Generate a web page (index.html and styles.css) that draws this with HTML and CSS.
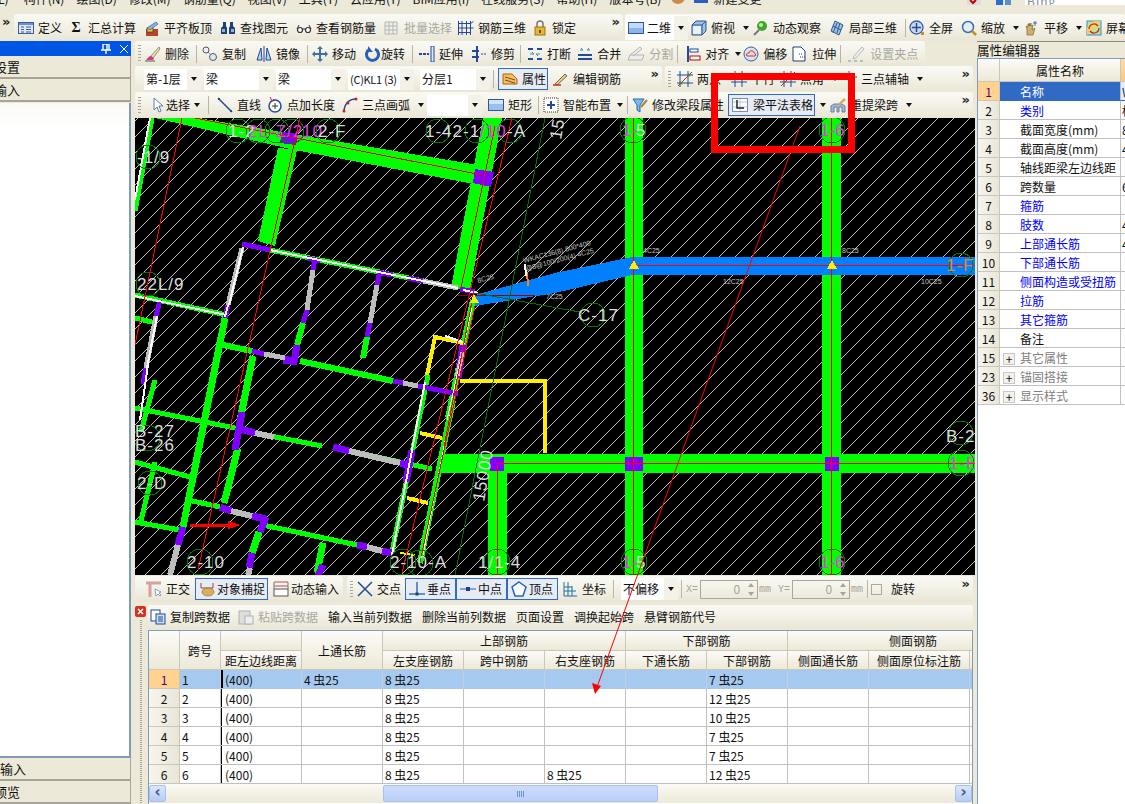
FILE: index.html
```html
<!DOCTYPE html>
<html lang="zh-CN">
<head>
<meta charset="utf-8">
<title>钢筋算量</title>
<link rel="stylesheet" href="styles.css">
</head>
<body>
<div class="app">
  <div class="menu">
    <span class="m m-first">(L)</span><span class="m">构件(N)</span><span class="m">绘图(D)</span><span class="m">修改(M)</span><span class="m">钢筋量(Q)</span><span class="m">视图(V)</span><span class="m">工具(T)</span><span class="m">云应用(Y)</span><span class="m">BIM应用(I)</span><span class="m">在线服务(S)</span><span class="m">帮助(H)</span><span class="m">版本号(B)</span>
    <svg class="ic face" viewBox="0 0 16 16"><circle cx="8" cy="4" r="7" fill="#c98a4a"/><path d="M1 1h14v2H1z" fill="#e8b020"/></svg>
    <svg class="ic ic-new" viewBox="0 0 16 16"><rect x="0" y="-6" width="14" height="16" fill="#2a5fc0"/><rect x="3" y="-3" width="8" height="10" fill="#dfe8fa"/></svg>
    <span class="m m-new">新建变更</span>
    <div class="ext">
      <svg class="ext-ic" viewBox="0 0 16 5"><rect width="14" height="5" fill="#ddd"/><path d="M3 0l3 3 3-3" stroke="#c00" stroke-width="2" fill="none"/></svg>
      <svg class="ext-ic" viewBox="0 0 16 5"><rect width="7" height="5" fill="#2a6fd0"/><rect x="9" width="6" height="5" fill="#5a8fd0"/></svg>
      <span class="bing">Bing</span>
    </div>
  </div>

  <div class="topbar">
    <div class="chev-box"><span class="chev">»</span></div>
    <div class="tb tb-a">
      <div class="it"><svg class="ic" viewBox="0 0 16 16"><rect x=".5" y="2.5" width="15" height="11" fill="#dfe8f5" stroke="#3a5f9a"/><rect x="1" y="3" width="14" height="2" fill="#6f93c8"/><path d="M3 7h3M3 9.500h3M3 12h3M8 7h5M8 9.500h5M8 12h5" stroke="#3a5f9a"/></svg>定义</div>
      <div class="it it-sigma"><span class="sigma">Σ</span>汇总计算</div>
      <div class="it"><svg class="ic" viewBox="0 0 16 16"><rect x="2" y="9" width="12" height="7" fill="#b8442a"/><rect x="3" y="8" width="6" height="4" fill="#f5d020" stroke="#333" stroke-width=".7"/><path d="M3 8l9-6 2 2-8 6z" fill="#8fb0d8" stroke="#3a5f9a" stroke-width=".7"/></svg>平齐板顶</div>
      <div class="it"><svg class="ic" viewBox="0 0 16 16"><path d="M3 2h3v4l1 2v6H1V8l2-2zM10 2h3v4l2 2v6H9V8l1-2z" fill="#1f3f78"/><rect x="2" y="9" width="3" height="3" fill="#8fb0d8"/><rect x="11" y="9" width="3" height="3" fill="#8fb0d8"/></svg>查找图元</div>
      <div class="it"><svg class="ic" viewBox="0 0 16 16"><circle cx="4" cy="10" r="2.500" fill="#fff" stroke="#333" stroke-width="1.200"/><circle cx="12" cy="10" r="2.500" fill="#fff" stroke="#333" stroke-width="1.200"/><path d="M6 9h4M1 9l2-4M15 9l-2-4" stroke="#333"/></svg>查看钢筋量</div>
      <div class="it off"><svg class="ic" viewBox="0 0 16 16"><path d="M1 2h12v12H1zM1 6h12M1 10h12M5 2v12M9 2v12" fill="#eee" stroke="#b5b5b0"/></svg>批量选择</div>
      <div class="it it-m2"><svg class="ic" viewBox="0 0 16 16"><path d="M.5 3.500h12l3-2M.5 8h15M.5 12.500h12M4 1v14M8.500 1v14M12.500 1v14M.5 1v14" fill="none" stroke="#1f4b9a"/></svg>钢筋三维</div>
      <div class="it it-m2"><svg class="ic" viewBox="0 0 16 16"><path d="M5 8V4a3 3 0 0 1 6 0v4" fill="none" stroke="#777" stroke-width="1.500"/><rect x="3" y="7" width="10" height="8" fill="#e8b830" stroke="#9a7510"/><rect x="7" y="10" width="2" height="3" fill="#6a4a00"/></svg>锁定</div>
      <span class="chev chev-end">»</span>
    </div>
    <div class="tb tb-b">
      <div class="white-drop">
        <svg class="ic" viewBox="0 0 16 16"><rect x=".5" y="2.500" width="15" height="11" fill="#8fb4ea" stroke="#2a5a9a"/><rect x="1" y="3" width="14" height="5" fill="#c4d9f6"/></svg><span>二维</span><span class="dd"><i class="ar"></i></span>
      </div>
      <div class="it"><svg class="ic" viewBox="0 0 16 16"><path d="M1 5l4-4h10v10l-4 4H1z" fill="#9cc0e8" stroke="#2d5a8a"/><path d="M1 5h10v10M11 5l4-4" fill="none" stroke="#2d5a8a"/><rect x="2" y="6" width="8" height="8" fill="#e8f0fa"/></svg>俯视<i class="ar ar-m"></i></div>
      <div class="it it-m3"><svg class="ic" viewBox="0 0 16 16"><circle cx="9" cy="6" r="5" fill="#3fa52f"/><circle cx="8" cy="5" r="2" fill="#c8f0a0"/><path d="M1 15l5-5" stroke="#777" stroke-width="2"/></svg>动态观察</div>
      <div class="it"><svg class="ic" viewBox="0 0 16 16"><path d="M6 1l8 4-4 10-8-4z" fill="#9cc0e8" stroke="#2d5a8a"/><path d="M4 6l8 4M8 3l-4 10M11 3l-3 10" stroke="#2d5a8a"/></svg>局部三维</div>
      <i class="sep sep-after5"></i>
      <div class="it"><svg class="ic" viewBox="0 0 16 16"><circle cx="7.500" cy="7.500" r="6.500" fill="#c8d8ee" stroke="#3a5f9a" stroke-width="1.300"/><path d="M7.500 3v9M3 7.500h9" stroke="#1f4b9a" stroke-width="1.500"/><rect x="12" y="12" width="3" height="3" fill="#c89020"/></svg>全屏</div>
      <div class="it"><svg class="ic" viewBox="0 0 16 16"><circle cx="7" cy="7" r="5.500" fill="#e4eefb" stroke="#3a6fb0" stroke-width="1.500"/><path d="M11 11l4 4" stroke="#c89020" stroke-width="2.500"/></svg>缩放<i class="ar ar-m"></i></div>
      <div class="it it-m2"><svg class="ic" viewBox="0 0 16 16"><path d="M3 15V9L2 6l2 1V4l1 2V3l1 3 1-3v3l2-1-1 5 3-2-2 7z" fill="#d0b070" stroke="#7a6530" stroke-width=".7"/><path d="M11 1v5M9 3h4" stroke="#3a6fb0"/></svg>平移<i class="ar ar-m"></i></div>
      <div class="it it-m3"><svg class="ic" viewBox="0 0 16 16"><rect x="1" y="1" width="14" height="14" fill="#bfe0a0" stroke="#3a8fc0"/><path d="M1 8l7-7h7L1 15z" fill="#f5d060"/><path d="M3 9a5 5 0 0 1 9-3M13 8a5 5 0 0 1-9 3" fill="none" stroke="#d02020" stroke-width="1.300"/></svg>屏幕旋转</div>
    </div>
  </div>

  <div class="main">
    <aside class="left">
      <div class="ptitle"><svg class="pin" viewBox="0 0 10 10"><path d="M2 0h6v6H2zM0 6h10M5 6v4M6 0v6" fill="none" stroke="#fff" stroke-width="1.400"/></svg><svg class="pin" viewBox="0 0 10 10"><path d="M1 1l8 8M9 1l-8 8" stroke="#fff"/></svg></div>
      <div class="acc acc-clip">设置</div>
      <div class="acc acc-clip">输入</div>
      <div class="list"></div>
      <div class="acc acc-b1">输入</div>
      <div class="acc acc-clip">预览</div>
    </aside>

    <section class="center">
      <div class="row row-2">
        <div class="tb tb-edit">
          <i class="grip"></i>
          <div class="it it-m3"><svg class="ic" viewBox="0 0 16 16"><path d="M14 1L6 10l2 2 7-9z" fill="#e8e0b0" stroke="#6a6a50" stroke-width=".7"/><path d="M6 10c-2 0-3 2-5 4h7l1-2z" fill="#d04080"/><path d="M0 15h10" stroke="#555"/></svg>删除</div>
          <i class="sep"></i>
          <div class="it it-m2"><svg class="ic" viewBox="0 0 16 16"><circle cx="4" cy="4" r="3" fill="#eef" stroke="#556"/><circle cx="11" cy="11" r="3.500" fill="#dde8f5" stroke="#556"/><path d="M6 6l3 3" stroke="#556" stroke-dasharray="1 1"/></svg>复制</div>
          <div class="it it-g2"><svg class="ic" viewBox="0 0 16 16"><path d="M5 2L1 14h5zM11 2l4 12h-5z" fill="#b8d0ec" stroke="#1f4b9a"/><path d="M8 0v16" stroke="#1f4b9a"/></svg>镜像</div>
          <i class="sep"></i>
          <div class="it it-m3"><svg class="ic" viewBox="0 0 16 16"><path d="M8 0l3 3H9v4h4V5l3 3-3 3V9H9v4h2l-3 3-3-3h2V9H3v2L0 8l3-3v2h4V3H5z" fill="#3a6fa8"/></svg>移动</div>
          <div class="it it-g1 it-t1"><svg class="ic" viewBox="0 0 16 16"><path d="M6 3a6 6 0 1 0 5 0" fill="none" stroke="#2a5fb8" stroke-width="3"/><path d="M4 0v6h5z" fill="#2a5fb8"/></svg>旋转</div>
          <i class="sep"></i>
          <div class="it it-m1"><svg class="ic" viewBox="0 0 16 16"><rect x="12" y="0" width="3" height="16" fill="#dfe8f5" stroke="#1f4b9a"/><path d="M0 8h10" stroke="#1f4b9a" stroke-width="2" stroke-dasharray="3 1"/></svg>延伸</div>
          <div class="it it-g1"><svg class="ic" viewBox="0 0 16 16"><path d="M1 5h7M1 11h7" stroke="#1f4b9a" stroke-width="2"/><path d="M6 0v16" stroke="#1f4b9a" stroke-width="2"/><path d="M10 8h6" stroke="#1f4b9a" stroke-dasharray="2 1"/></svg>修剪</div>
          <i class="sep sep-m2"></i>
          <div class="it it-m1"><svg class="ic" viewBox="0 0 16 16"><path d="M1 13h5M10 13h5M1 3h5M10 3h5" stroke="#1f4b9a" stroke-width="2"/><path d="M3 8h4l-2-2M13 8H9l2 2" fill="none" stroke="#2a8fc0"/></svg>打断</div>
          <div class="it it-m1"><svg class="ic" viewBox="0 0 16 16"><path d="M1 13h14M1 9h14" stroke="#1f4b9a" stroke-width="2"/><path d="M3 4h3l-2-2M13 4h-3l2-2" fill="none" stroke="#2a8fc0"/></svg>合并</div>
          <div class="it off it-m1"><svg class="ic ic-w" viewBox="0 0 18 16"><path d="M1 14h14l2-5H3zM3 9l10-8 2 2-9 7" fill="#eee" stroke="#b5b5b0"/></svg>分割</div>
          <i class="sep sep-m3"></i>
          <div class="it"><svg class="ic" viewBox="0 0 16 16"><path d="M3 0v16" stroke="#1f4b9a" stroke-width="2"/><rect x="5" y="3" width="8" height="3" fill="#fff" stroke="#1f4b9a"/><rect x="5" y="10" width="10" height="4" fill="#fff" stroke="#c00000"/></svg>对齐<i class="ar ar-n"></i></div>
          <div class="it it-m5"><svg class="ic" viewBox="0 0 16 16"><circle cx="8" cy="8" r="7" fill="#d8e4f4" stroke="#3a5f9a"/><path d="M4 10c-2-3 2-3 2-3 0-3 5-3 5 0 2 0 2 3 1 3z" fill="#f5d8d0" stroke="#c03030"/></svg>偏移</div>
          <div class="it it-m2"><svg class="ic" viewBox="0 0 16 16"><path d="M1 1h8l4 4v10H1z" fill="#fff" stroke="#1f3f78"/><path d="M7 8h3M8 11h5" stroke="#1f3f78" stroke-dasharray="1 1"/></svg>拉伸</div>
          <i class="sep sep-m3"></i>
          <div class="it off"><svg class="ic ic-w" viewBox="0 0 18 16"><path d="M6 10l8-9 2 2-8 9-3 1z" fill="#eee" stroke="#bbb"/><path d="M0 15h3M6 15h3M12 15h3" stroke="#bbb" stroke-width="2"/></svg>设置夹点</div>
        </div>
      </div>

      <div class="row row-3">
        <div class="tb tb-combos">
          <div class="cb cb-58"><span>第-1层</span><span class="dd"><i class="ar"></i></span></div>
          <div class="cb cb-69"><span>梁</span><span class="dd"><i class="ar"></i></span></div>
          <div class="cb cb-69"><span>梁</span><span class="dd"><i class="ar"></i></span></div>
          <div class="cb cb-66"><span>(C)KL1 (3)</span><span class="dd"><i class="ar"></i></span></div>
          <div class="cb cb-70"><span>分层1</span><span class="dd"><i class="ar"></i></span></div>
          <i class="sep"></i>
          <div class="it it-on it-attr"><svg class="ic" viewBox="0 0 16 16"><path d="M1 3h9l5 5v5H1z" fill="#f5c060" stroke="#b06010"/><path d="M3 6l10 3M3 9l10 3" stroke="#705010"/></svg>属性</div>
          <div class="it"><svg class="ic" viewBox="0 0 16 16"><path d="M2 13L12 3l2 2-10 9z" fill="#e8d070" stroke="#333" stroke-width=".7"/><path d="M0 14h8" stroke="#c03030" stroke-width="1.500"/></svg>编辑钢筋</div>
          <span class="chev chev-end">»</span>
        </div>
        <div class="tb tb-axis">
          <i class="grip"></i>
          <div class="it"><svg class="ic" viewBox="0 0 16 16"><path d="M3 0v16M11 0v16M0 4h16M0 12h16" stroke="#1f4b9a"/><path d="M1 15L15 1" stroke="#d02020"/><circle cx="4" cy="12" r="1.500" fill="#3a8f30"/><circle cx="12" cy="4" r="1.500" fill="#3a8f30"/></svg>两点</div>
          <div class="it it-par"><svg class="ic" viewBox="0 0 16 16"><path d="M4 0v16M11 0v16M0 5h16M0 11h16" stroke="#1f4b9a"/></svg>平行</div>
          <div class="it it-m1"><svg class="ic" viewBox="0 0 16 16"><path d="M4 0v16M11 0v16M0 5h16M0 11h16" stroke="#1f4b9a"/><path d="M1 15L15 1" stroke="#d02020"/></svg>点角<i class="ar ar-m"></i></div>
          <div class="it it-m5"><svg class="ic" viewBox="0 0 16 16"><path d="M8 0v16M0 6h16" stroke="#1f4b9a"/><circle cx="12" cy="12" r="2" fill="#d02020"/></svg>三点辅轴<i class="ar ar-m"></i></div>
          <span class="chev chev-end">»</span>
        </div>
      </div>

      <div class="row row-4">
        <div class="tb tb-draw">
          <i class="grip"></i>
          <div class="it it-t0"><svg class="ic" viewBox="0 0 16 16"><path d="M4 1v12l3-3 2 5 2-1-2-5h4z" fill="#fff" stroke="#5a7fb0"/></svg>选择<i class="ar ar-m"></i></div>
          <i class="sep sep-r2"></i>
          <div class="it"><svg class="ic" viewBox="0 0 16 16"><path d="M1 1l14 14" stroke="#1f4b9a" stroke-width="1.500"/><path d="M1 1h2v2H1zM13 13h2v2h-2z" fill="#1f4b9a"/></svg>直线</div>
          <div class="it"><svg class="ic" viewBox="0 0 16 16"><circle cx="8" cy="9" r="6" fill="#fff" stroke="#1f4b9a" stroke-width="1.500"/><path d="M8 6v6M5 9h6" stroke="#333"/><path d="M3 0l2 4 2-2" fill="none" stroke="#c03030"/></svg>点加长度</div>
          <div class="it it-g1"><svg class="ic" viewBox="0 0 16 16"><path d="M2 15C2 7 7 2 14 2" fill="none" stroke="#1f4b9a" stroke-width="1.500"/><circle cx="2" cy="14" r="1.500" fill="#d02020"/><circle cx="14" cy="2" r="1.500" fill="#d02020"/><circle cx="6" cy="6" r="1.500" fill="#d02020"/></svg>三点画弧<i class="ar ar-m"></i></div>
          <div class="cb cb-55 cb-tight"><span></span><span class="dd"><i class="ar"></i></span></div>
          <div class="it"><svg class="ic" viewBox="0 0 16 16"><rect x=".5" y="2.500" width="15" height="11" fill="#9cc0ee" stroke="#2a5a9a"/><rect x="1" y="3" width="14" height="4" fill="#d4e3f8"/></svg>矩形</div>
          <i class="sep"></i>
          <div class="it it-m2"><svg class="ic" viewBox="0 0 16 16"><rect x="1" y="1" width="14" height="14" fill="#fff" stroke="#333" stroke-dasharray="1 1"/><path d="M8 4v8M4 8h8" stroke="#1f4b9a" stroke-width="2"/></svg>智能布置<i class="ar ar-n"></i></div>
          <i class="sep sep-m2"></i>
          <div class="it it-m2"><svg class="ic" viewBox="0 0 16 16"><path d="M1 2h11L8 8v7L5 13V8z" fill="#7fb8e8" stroke="#1f6fa8"/><path d="M9 10l6-7" stroke="#b08030" stroke-width="2"/></svg>修改梁段属性</div>
          <div class="it it-on it-table it-m2"><svg class="ic" viewBox="0 0 16 16"><rect x=".5" y="1.500" width="15" height="13" fill="#fff" stroke="#7a8fae"/><path d="M1 5h14M1 10h14M8 2v12" stroke="#b9c6da"/><path d="M5 3v8h7" fill="none" stroke="#222" stroke-width="1.500"/></svg>梁平法表格</div>
          <i class="ar ar-after"></i>
          <div class="it"><svg class="ic" viewBox="0 0 16 16"><path d="M1 15V9l3-2h8l3 2v6h-3v-5H9v5H7v-5H4v5z" fill="#a0b8d8" stroke="#6a7f9a"/><path d="M8 7l6-6 2 2-6 5z" fill="#d8a860"/></svg>重提梁跨<i class="ar ar-m"></i></div>
          <span class="chev chev-end">»</span>
        </div>
      </div>

      <svg class="cad" viewBox="135 118 840 457" shape-rendering="crispEdges" aria-label="CAD 图">
        <defs>
          <pattern id="hatch" width="16" height="16" patternUnits="userSpaceOnUse"><path d="M0 16L16 0" stroke="#bdbdbd" stroke-width="1"/></pattern>
        </defs>
        <rect x="135" y="118" width="840" height="457" fill="#000"/>
        <rect x="135" y="118" width="840" height="457" fill="url(#hatch)"/>

        <!-- thick members -->
        <g fill="#00ff00">
          <polygon points="155,118 198,118 478,165 474,184 295,150"/>
          <polygon points="278,148 297,150 275,246 258,241"/>
          <polygon points="483,118 502,118 470,290 451,288"/>
          <rect x="441" y="454" width="534" height="19"/>
          <rect x="625" y="118" width="18" height="457"/>
          <rect x="822" y="118" width="19" height="457"/>
          <rect x="488" y="463" width="19" height="112"/>
        </g>
        <g fill="#8000ff">
          <polygon points="282,132 298,134 296,145 280,143"/>
          <polygon points="475,169 494,172 491,187 473,183"/>
          <rect x="490" y="457" width="14" height="14"/>
          <rect x="625" y="457" width="18" height="14"/>
          <rect x="825" y="457" width="14" height="14"/>
        </g>
        <polygon points="475,295 555,273 632,257 975,257 975,275 632,275 555,293 475,306" fill="#0080ff"/>

        <!-- thin beams -->
        <g fill="none" stroke-width="6">
          <path class="g" stroke-width="5" d="M152 118L135 211"/>
          <path class="g" stroke-width="5" d="M270 250L424 281M135 295L226 315M135 318L156 323M135 408L240 429M255 433L322 446M350 451L432 469M188 500L220 507M263 525L357 545M135 522L180 530M135 462L190 477M155 462L140 525"/>
          <path class="g" stroke-width="7" d="M225 318L183 527M253 356L240 420M238 448L224 503M323 543L317 573M259 532L252 553"/>
          <path class="g" stroke-width="6" d="M223 345L252 351M300 361L393 381M303 323L297 345M367 337L363 358M473 300L448 418M453 400L420 563"/>
          <path class="g" stroke-width="5" d="M428 375L392 552M155 380L141 432"/>
          <path class="p" stroke-width="5" d="M242 244L270 250M307 258L320 261M377 272L393 275M407 278L423 281M460 289L475 292M252 351L264 354M285 358L297 361M393 381L403 383M418 386L458 394M315 258L313 270M380 271L377 285M228 305L225 318M160 300L156 316M146 368L143 384M307 310L303 323M370 323L367 337"/>
          <path class="p" stroke-width="7" d="M297 345L294 362M283 360L297 362M242 412L235 450M240 429L255 433M333 447L349 451M400 463L410 466M412 450L406 482M183 527L178 545M220 507L231 511M252 516L266 519M266 517L260 532M252 553L249 568M357 545L367 547M382 551L392 553M323 565L317 578M463 345L458 378"/>
          <path class="s" stroke-width="5" d="M423 281L458 288M242 248L228 305M313 270L307 310M377 285L370 323M156 316L146 368M264 354L285 358M403 383L418 386M463 352L457 376"/>
          <path class="s" stroke-width="6" d="M255 433L274 437M349 451L400 463M231 511L252 516M367 547L382 551M178 545L170 575M250 568L248 575"/>
          <path class="y" stroke-width="4" d="M427 375L435 337L463 343M460 381H545V453M420 433L442 438M407 498L428 503"/>
          <path class="w" stroke-width="2" d="M150 118L135 200M270 250L458 288M243 247L229 305M228 305L225 317M135 296L226 315M157 316L147 368M148 365L140 420M425 382L392 555M445 336L463 342M463 290L478 293"/>
          <path class="wl" stroke-width="2" d="M472 308L447 420M453 400L423 555"/>
          <path class="y" stroke-width="2" d="M415 555L400 553"/>
        </g>

        <!-- axis circles -->
        <g fill="none" stroke="#007a00" stroke-width="1">
          <circle cx="238" cy="131" r="12"/><circle cx="258" cy="131" r="12"/><circle cx="277" cy="131" r="12"/><circle cx="292" cy="131" r="12"/><circle cx="328" cy="131" r="12"/>
          <circle cx="438" cy="131" r="12"/><circle cx="477" cy="131" r="12"/><circle cx="510" cy="131" r="12"/>
          <circle cx="148" cy="157" r="12"/><circle cx="148" cy="284" r="12"/>
          <circle cx="633" cy="130" r="13"/><circle cx="832" cy="130" r="13"/>
          <circle cx="593" cy="315" r="12"/><circle cx="961" cy="265" r="12"/><circle cx="961" cy="433" r="12"/><circle cx="961" cy="463" r="13"/>
          <circle cx="147" cy="438" r="13"/><circle cx="150" cy="483" r="12"/><circle cx="200" cy="562" r="13"/><circle cx="403" cy="562" r="13"/><circle cx="420" cy="563" r="13"/><circle cx="497" cy="562" r="13"/>
          <circle cx="634" cy="562" r="13"/><circle cx="832" cy="562" r="13"/>
        </g>

        <!-- centre and reference lines -->
        <g fill="none">
          <path class="r" d="M182 118L135 345M300 118L198 570M512 118L402 573M195 118L482 175M495 126L461 288M633 118V575M831 118V575M497 465V575M497 463H975M475 306L420 562M630 265H975M474 291L444 447"/>
          <path class="dr" d="M458 295H535"/>
          <path class="dg" d="M545 118L455 575M475 293L580 312"/>
          <path class="or" stroke-width="2" d="M527 272L528 286"/>
          <path class="w" stroke-width="2" d="M525 264L526 276"/>
          <path class="r" stroke-width="3" d="M190 525H228"/>
        </g>
        <polygon points="228,521 240,525 228,529" fill="#f00"/>
        <g fill="#ffee00">
          <polygon points="634,260 639,269 629,269"/>
          <polygon points="832,260 837,269 827,269"/>
          <polygon points="474,294 479,303 470,303"/>
        </g>

        <!-- labels -->
        <g class="lbl">
          <text x="228" y="137">1-2</text><text class="pk" x="248" y="137">2L-Z/2</text><text class="pk" x="302" y="137">10</text><text x="318" y="137">2-F</text>
          <text x="425" y="137">1-42-1</text><text class="pk" x="480" y="137">/10</text><text x="507" y="137">-A</text>
          <text x="137" y="163">-1/9</text>
          <text x="137" y="290">22L/9</text>
          <text x="622" y="136" class="pk">1-</text><text x="636" y="136">5</text>
          <text x="820" y="136" class="pk">1-</text><text x="835" y="136" class="pk">6</text>
          <text x="578" y="321">C-17</text>
          <text x="946" y="271" class="or-t">1-F</text>
          <text x="946" y="442">B-2</text>
          <text x="949" y="469" class="pk">1-E</text>
          <text x="135" y="437">B-27</text><text x="135" y="451">B-26</text>
          <text x="137" y="489">2-D</text>
          <text x="187" y="568">2-10</text>
          <text x="390" y="568">2-10-A</text>
          <text x="478" y="568">1/1</text><text x="504" y="568">-4</text>
          <text x="622" y="568" class="pk">1-</text><text x="636" y="568">5</text>
          <text x="820" y="568" class="pk">1-</text><text x="835" y="568" class="pk">6</text>
          <text transform="translate(484,502) rotate(-80)">15000</text>
          <text transform="translate(561,140) rotate(-80)">15</text>
        </g>
        <g class="tiny">
          <text transform="translate(524,263) rotate(-15)">WKAC136(8) 800*400</text>
          <text transform="translate(526,271) rotate(-15)">@8@100/200(4) 4C25</text>
          <text transform="translate(478,283) rotate(-15)">8C25</text>
          <text x="643" y="253">4C25</text><text x="842" y="253">8C25</text>
          <text x="723" y="284">12C25</text><text x="921" y="284">10C25</text>
          <text x="546" y="299">7C25</text>
        </g>
      </svg>

      <div class="row row-snap">
        <div class="tb tb-snap1">
          <div class="it"><svg class="ic" viewBox="0 0 16 16"><path d="M0 2h15M4 2v14" stroke="#d8a0a0" stroke-width="3"/><path d="M9 8l1 7 2-2 2 2 1-1-2-2 2-1z" fill="#fff" stroke="#5a7fb0" stroke-width=".7"/></svg>正交</div>
          <div class="it it-on it-snapb"><svg class="ic" viewBox="0 0 16 16"><path d="M2 2v5h12V2" fill="none" stroke="#a04040"/><ellipse cx="9" cy="11" rx="6" ry="4" fill="#d8b060" stroke="#806020" stroke-width=".6"/></svg>对象捕捉</div>
          <div class="it it-t2"><svg class="ic" viewBox="0 0 16 16"><path d="M1 1h14M1 5h14" stroke="#c05050"/><rect x="1" y="8" width="14" height="7" fill="#fff" stroke="#555"/><path d="M1 8V1M15 8V1" stroke="#777"/></svg>动态输入</div>
        </div>
        <div class="tb tb-snap2">
          <i class="grip"></i>
          <div class="it"><svg class="ic" viewBox="0 0 16 16"><path d="M1 1l14 14M15 1L1 15" stroke="#1f4b9a" stroke-width="1.500"/></svg>交点</div>
          <div class="it it-on it-pt"><svg class="ic" viewBox="0 0 16 16"><path d="M0 13h16" stroke="#3a6fb0" stroke-width="1.500"/><path d="M8 1v12" stroke="#3a6fb0" stroke-width="1.500"/><rect x="6.500" y="11.500" width="3" height="3" fill="#1f3f78"/></svg>垂点</div>
          <div class="it it-on it-pt"><svg class="ic" viewBox="0 0 16 16"><path d="M0 8h16" stroke="#7fa8d8" stroke-width="2"/><rect x="6" y="6" width="4" height="4" fill="#1f3f78"/></svg>中点</div>
          <div class="it it-on it-pt"><svg class="ic" viewBox="0 0 16 16"><path d="M8 1l7 5-3 9H4L1 6z" fill="#fff" stroke="#2a5fb8" stroke-width="1.500"/></svg>顶点</div>
          <div class="it it-co"><svg class="ic" viewBox="0 0 16 16"><path d="M2 1v14h13M6 1v14M10 5v10M2 6h8M2 10h12" stroke="#1f6fa8" fill="none"/></svg>坐标</div>
          <i class="sep sep-sp"></i>
          <div class="cb cb-58 cb-off"><span>不偏移</span><span class="dd"><i class="ar"></i></span></div>
          <i class="sep"></i>
          <span class="xy">X=</span>
          <div class="num"><span>0</span><span class="spin"><i class="ar ar-u"></i><i class="ar ar-g"></i></span></div>
          <span class="xy">mm</span>
          <span class="xy xy-y">Y=</span>
          <div class="num"><span>0</span><span class="spin"><i class="ar ar-u"></i><i class="ar ar-g"></i></span></div>
          <span class="xy">mm</span>
          <i class="sep"></i>
          <i class="check"></i>
          <span class="rot">旋转</span>
          <span class="chev chev-end">»</span>
        </div>
      </div>

      <div class="dock">
        <div class="dock-side">
          <svg class="dock-x" viewBox="0 0 11 11"><rect width="11" height="11" rx="2" fill="#d83020"/><path d="M3 3l5 5M8 3l-5 5" stroke="#fff" stroke-width="1.500"/></svg>
          <i class="dock-grip"></i>
        </div>
        <div class="dock-body">
          <div class="tb tb-grid">
            <div class="it"><svg class="ic" viewBox="0 0 16 16"><rect x="1" y="1" width="9" height="11" fill="#fff" stroke="#1f4b9a"/><rect x="6" y="5" width="9" height="10" fill="#cfe0f5" stroke="#1f4b9a"/><path d="M8 8h5M8 10h5M8 12h5" stroke="#1f4b9a"/></svg>复制跨数据</div>
            <div class="it off it-m2"><svg class="ic" viewBox="0 0 16 16"><rect x="1" y="2" width="11" height="13" fill="#ddd" stroke="#b0b0b0"/><rect x="7" y="7" width="8" height="8" fill="#eee" stroke="#b0b0b0"/></svg>粘贴跨数据</div>
            <div class="it">输入当前列数据</div>
            <div class="it">删除当前列数据</div>
            <div class="it">页面设置</div>
            <div class="it">调换起始跨</div>
            <div class="it">悬臂钢筋代号</div>
          </div>
          <div class="gridwrap">
            <table class="gt">
              <colgroup><col class="c31"><col class="c41"><col class="c81"><col class="c81"><col class="c81"><col class="c81"><col class="c81"><col class="c81"><col class="c81"><col class="c81"><col class="c101"><col class="c2"></colgroup>
              <thead>
                <tr class="h1">
                  <th rowspan="2"></th><th rowspan="2">跨号</th><th></th><th rowspan="2">上通长筋</th><th colspan="3">上部钢筋</th><th colspan="2">下部钢筋</th><th colspan="3" class="th-side">侧面钢筋</th>
                </tr>
                <tr class="h2">
                  <th>距左边线距离</th><th>左支座钢筋</th><th>跨中钢筋</th><th>右支座钢筋</th><th>下通长筋</th><th>下部钢筋</th><th>侧面通长筋</th><th>侧面原位标注筋</th><th class="th-end"></th>
                </tr>
              </thead>
              <tbody>
                <tr class="sel"><th>1</th><td>1</td><td class="fz">(400)</td><td>4 虫25</td><td>8 虫25</td><td></td><td></td><td></td><td>7 虫25</td><td></td><td></td><td class="end"></td></tr>
                <tr><th>2</th><td>2</td><td class="fz">(400)</td><td></td><td>8 虫25</td><td></td><td></td><td></td><td>12 虫25</td><td></td><td></td><td class="end"></td></tr>
                <tr><th>3</th><td>3</td><td class="fz">(400)</td><td></td><td>8 虫25</td><td></td><td></td><td></td><td>10 虫25</td><td></td><td></td><td class="end"></td></tr>
                <tr><th>4</th><td>4</td><td class="fz">(400)</td><td></td><td>8 虫25</td><td></td><td></td><td></td><td>7 虫25</td><td></td><td></td><td class="end"></td></tr>
                <tr><th>5</th><td>5</td><td class="fz">(400)</td><td></td><td>8 虫25</td><td></td><td></td><td></td><td>7 虫25</td><td></td><td></td><td class="end"></td></tr>
                <tr><th>6</th><td>6</td><td class="fz">(400)</td><td></td><td>8 虫25</td><td></td><td>8 虫25</td><td></td><td>12 虫25</td><td></td><td></td><td class="end"></td></tr>
              </tbody>
            </table>
            <div class="hscroll">
              <span class="sb-btn">‹</span>
              <div class="sb-track"><div class="sb-thumb"><i class="sb-lines"></i></div></div>
              <span class="sb-btn">›</span>
            </div>
          </div>
        </div>
      </div>
    </section>

    <aside class="right">
      <div class="rtitle">属性编辑器</div>
      <div class="rgrid">
        <table class="pt">
          <colgroup><col class="p22"><col class="p121"><col class="prest"></colgroup>
          <thead><tr><th></th><th>属性名称</th><th class="orange"></th></tr></thead>
          <tbody>
            <tr class="psel"><th>1</th><td>名称</td><td>W</td></tr>
            <tr><th>2</th><td class="b">类别</td><td>框</td></tr>
            <tr><th>3</th><td>截面宽度(mm)</td><td>8</td></tr>
            <tr><th>4</th><td>截面高度(mm)</td><td>4</td></tr>
            <tr><th>5</th><td>轴线距梁左边线距</td><td></td></tr>
            <tr><th>6</th><td>跨数量</td><td>6</td></tr>
            <tr><th>7</th><td class="b">箍筋</td><td></td></tr>
            <tr><th>8</th><td class="b">肢数</td><td>4</td></tr>
            <tr><th>9</th><td class="b">上部通长筋</td><td>4</td></tr>
            <tr><th>10</th><td class="b">下部通长筋</td><td></td></tr>
            <tr><th>11</th><td class="b">侧面构造或受扭筋</td><td></td></tr>
            <tr><th>12</th><td class="b">拉筋</td><td></td></tr>
            <tr><th>13</th><td class="b">其它箍筋</td><td></td></tr>
            <tr><th>14</th><td>备注</td><td></td></tr>
            <tr><th>15</th><td class="grp"><i class="plus">+</i>其它属性</td><td></td></tr>
            <tr><th>23</th><td class="grp"><i class="plus">+</i>锚固搭接</td><td></td></tr>
            <tr><th>36</th><td class="grp"><i class="plus">+</i>显示样式</td><td></td></tr>
          </tbody>
        </table>
      </div>
    </aside>
  </div>

  <div class="redbox"></div>
  <svg class="overlay" viewBox="0 0 1125 804">
    <path d="M800 126L597 687" stroke="#f00" fill="none"/>
    <polygon points="595,694 592,683 601,686" fill="#f00"/>
  </svg>
</div>
</body>
</html>
```
FILE: styles.css
```css
* { box-sizing: border-box; }
html, body { margin: 0; padding: 0; background: #fff; }
body { font: 12px/16px "Noto Sans CJK SC", "Liberation Sans", sans-serif; color: #111; }
i { font-style: normal; }

.app { position: relative; width: 1125px; height: 804px; overflow: hidden; display: flex; flex-direction: column; background: #ece9d8; }

/* menu */
.menu { height: 14px; flex: none; display: flex; align-items: flex-start; overflow: hidden; gap: 12px; }
.m { margin-top: -9px; white-space: nowrap; line-height: 16px; }
.m-first { margin-left: -6px; margin-right: 3px; }
.m-new { margin-left: -9px; }
.ic { width: 16px; height: 16px; flex: none; display: block; }
.menu .ic { margin-top: -7px; }
.face { margin-left: -3px; }
.ic-new { margin-left: -4px; }
.ext { margin-left: auto; width: 158px; height: 5px; display: flex; gap: 13px; align-items: flex-start; }
.ext-ic { width: 16px; height: 5px; flex: none; }
.bing { flex: 1; background: #fff; height: 5px; line-height: 1px; color: #889; padding-left: 2px; overflow: hidden; letter-spacing: 1px; }

/* toolbars */
.topbar { height: 27px; flex: none; display: flex; align-items: stretch; }
.chev-box { width: 14px; flex: none; }
.chev { font: bold 13px/14px "DejaVu Sans", sans-serif; color: #222; }
.chev-box .chev { display: block; margin: 1px 0 0 2px; }
.chev-end { margin-left: auto; align-self: flex-start; padding: 1px 3px 0 0; }

.tb { display: flex; align-items: center; background: linear-gradient(#fafaf4, #f4f2e8 45%, #e9e6d6); border-radius: 3px; flex: none; gap: 8px; white-space: nowrap; }
.tb-a { width: 609px; padding-left: 4px; }
.tb-b { flex: 1; margin-left: 2px; padding-left: 0; gap: 8px; overflow: hidden; }
.tb-b .ar-m { margin-right: -1px; }
.it { display: flex; align-items: center; gap: 4px; height: 22px; flex: none; }
.off { color: #a8a8a0; }
.sigma { font: bold 14px/16px "Liberation Serif", serif; width: 10px; margin-right: 3px; text-align: center; }
.it-sigma { margin-left: 1px; }
.it-m1 { margin-left: -1px; }
.it-m2 { margin-left: -2px; }
.it-m3 { margin-left: -3px; }
.it-m5 { margin-left: -5px; }
.it-g1 { margin-left: 1px; }
.it-g2 { margin-left: 3px; }
.it-t0 { gap: 0; }
.it-t1 { gap: 1px; }
.it-t2 { gap: 2px; }
.sep { width: 1px; height: 18px; background: #b8b5a6; flex: none; }
.sep-after5 { margin-right: -5px; }
.sep-m2 { margin-left: -2px; }
.sep-m3 { margin-left: -3px; }
.sep-r2 { margin-right: 2px; }
.grip { width: 3px; height: 17px; flex: none; background: repeating-linear-gradient(#a8a598 0 1px, transparent 1px 3px); }
.ar { display: inline-block; width: 0; height: 0; border: 3px solid transparent; border-top: 4px solid #111; border-bottom: 0; flex: none; }
.ar-m { margin-left: 4px; margin-right: 2px; }
.ar-n { margin-left: 2px; }
.ar-after { margin: 0 -2px 0 -1px; }
.dd { width: 14px; height: 100%; display: flex; align-items: center; justify-content: center; background: #f4f2e8; flex: none; }

.white-drop { width: 62px; height: 25px; display: flex; align-items: center; gap: 3px; background: #fff; padding-left: 3px; flex: none; margin-right: -4px; }
.white-drop > span:nth-child(2) { width: 27px; }
.white-drop .dd { margin-left: auto; height: 24px; }

/* main */
.main { flex: 1; display: flex; min-height: 0; }

.left { width: 131px; flex: none; display: flex; flex-direction: column; }
.ptitle { height: 15px; background: #0055e5; display: flex; justify-content: flex-end; align-items: center; gap: 8px; padding-right: 2px; }
.pin { width: 10px; height: 10px; }
.acc { height: 23px; flex: none; font-size: 13px; line-height: 22px; border: 1px solid #a8a598; border-width: 0 1px 2px 0; background: #ece9d8; overflow: hidden; white-space: nowrap; }
.acc-clip { text-indent: -6px; }
.acc-b1 { text-indent: 0; }
.list { flex: 1; background: linear-gradient(#fbfaf5, #fff 30px); border: solid #7f9db9; border-width: 0 2px 2px 0; margin-top: 1px; }

.center { width: 846px; flex: none; padding-left: 4px; display: flex; flex-direction: column; }
.row { display: flex; flex: none; gap: 3px; }
.row-2 { height: 25px; }
.row-3, .row-4 { height: 26px; }
.row .tb { height: 100%; }
.row .grip { margin-left: 3px; }

.tb-edit { width: 790px; gap: 7px; padding-left: 0; }
.ic-w { width: 18px; }

.tb-combos { width: 527px; gap: 3px; padding-left: 9px; }
.cb { display: flex; align-items: center; justify-content: space-between; height: 21px; background: #fff; padding-left: 2px; flex: none; overflow: hidden; }
.cb > span:first-child { overflow: hidden; white-space: nowrap; }
.cb-58 { width: 57px; }
.cb-69 { width: 69px; }
.cb-66 { width: 66px; font-size: 11px; letter-spacing: -.3px; }
.cb-70 { width: 70px; margin-left: 3px; }
.cb-55 { width: 55px; }
.cb-off { height: 22px; }
.tb-combos .sep { margin: 0 1px 0 0; }
.it-on { background: #e6ebf4; border: 1px solid #316ac5; padding: 0 3px; }
.it-attr { width: 50px; margin-right: 2px; }
.tb-axis { width: 308px; gap: 6px; padding-left: 0; }
.it-par { margin-left: 4px; }

.tb-draw { width: 838px; gap: 6px; padding-left: 0; }
.tb-draw > .it:nth-child(2) { margin-left: 3px; }
.cb-tight { margin-left: -5px; }
.it-table { width: 87px; gap: 5px; }

/* canvas */
.cad { width: 840px; height: 457px; flex: none; display: block; }
.g { stroke: #00ff00; }
.p { stroke: #8000ff; }
.s { stroke: #bdbdbd; }
.y { stroke: #ffee00; }
.w { stroke: #fff; }
.wl { stroke: #fff; stroke-width: 1px; }
.r { stroke: #f00; }
.dr { stroke: #a00000; }
.dg { stroke: #007000; }
.or { stroke: #ff8020; }
.lbl text { font: 17px "Liberation Sans", sans-serif; fill: #dcdcdc; letter-spacing: 1px; }
.lbl text.pk { fill: #e040e0; }
.lbl text.or-t { fill: #e08030; }
.tiny text { font: 7px "Liberation Sans", sans-serif; fill: #c8c8c8; }

/* snap */
.row-snap { height: 26px; margin-top: 1px; gap: 4px; }
.tb-snap1 { width: 208px; gap: 5px; padding-left: 11px; }
.it-snapb { width: 73px; gap: 2px; }
.tb-snap2 { width: 626px; gap: 4px; padding-left: 0; }
.it-pt { width: 51px; gap: 2px; margin-right: -4px; }
.it-co { margin-left: 4px; }
.sep-sp { margin: 0 3px; }
.tb-snap2 .cb { margin: 0 -1px 0 0; }
.xy { color: #a8a598; font: 10px "Liberation Mono", monospace; flex: none; }
.xy-y { margin-left: 3px; }
.num { width: 58px; height: 19px; margin: 0 -3px 0 -2px; border: 1px solid #aca899; display: flex; align-items: center; justify-content: flex-end; color: #a8a598; gap: 5px; flex: none; }
.spin { width: 12px; display: flex; flex-direction: column; gap: 5px; align-items: center; }
.ar-u { border-top: 0; border-bottom: 4px solid #a8a598; }
.ar-g { border-top-color: #a8a598; }
.check { width: 11px; height: 11px; border: 1px solid #aca899; flex: none; margin-left: -1px; }
.rot { margin-left: 5px; }

/* dock */
.dock { flex: 1; min-height: 0; display: flex; margin-top: 3px; }
.dock-side { width: 13px; flex: none; display: flex; flex-direction: column; align-items: flex-start; }
.dock-x { width: 11px; height: 11px; flex: none; margin-top: 1px; }
.dock-grip { width: 2px; flex: 1; margin: 3px 0 0 5px; background: repeating-linear-gradient(#a8a598 0 1px, transparent 1px 2px); }
.dock-body { width: 825px; flex: none; display: flex; flex-direction: column; }
.tb-grid { height: 24px; gap: 10px; padding-left: 2px; margin-bottom: 1px; }

.gridwrap { border: 1px solid #7f9db9; border-bottom: 0; flex: 1; overflow: hidden; background: #fff; }
.gt, .pt { border-collapse: separate; border-spacing: 0; table-layout: fixed; }
.gt { width: 823px; }
.c31 { width: 31px; } .c41 { width: 41px; } .c81 { width: 81px; } .c101 { width: 101px; } .c2 { width: 2px; }
.gt th, .gt td, .pt th, .pt td { padding: 0; font-weight: 400; line-height: 17px; height: 19px; white-space: nowrap; overflow: hidden; border-right: 1px solid #c0c0c0; border-bottom: 1px solid #c0c0c0; }
.gt thead th, .pt thead th { background: linear-gradient(#fcfbf7, #ece9d8); border-color: #c9c7b8; text-align: center; }
.gt .h1 th { height: 20px; }
.th-side { padding-left: 66px !important; border-right: 0 !important; }
.th-end { border-right: 0 !important; }
.gt tbody th, .pt tbody th { background: linear-gradient(90deg, #f6f5ee, #e9e6d8); text-align: center; border-color: #c9c7b8; }
.gt td { padding-left: 2px; }
.end { border-right: 0 !important; padding: 0 !important; }
.fz { padding-left: 4px !important; box-shadow: inset 1px 0 0 #000; }
.sel td { background: #a6c9ef; border-bottom-color: #a6c9ef; border-right-color: #bcd0e8; }
.sel th { background: #ffd28f !important; color: #4b0082; }
.sel .fz { box-shadow: inset 2px 0 0 #000; }

.hscroll { height: 19px; display: flex; align-items: stretch; background: linear-gradient(#fbfaf5, #ece9d8); }
.sb-btn { width: 17px; flex: none; margin: 1px 0; background: linear-gradient(#dbe6fb, #b6ccf6); border: 1px solid #a9c0ee; border-radius: 2px; color: #3d5a8a; font: bold 15px/13px "DejaVu Sans", sans-serif; text-align: center; }
.sb-track { flex: 1; padding-left: 217px; }
.sb-thumb { width: 275px; height: 17px; margin-top: 1px; background: linear-gradient(#cddcfb, #b9cffa); border-radius: 2px; border: 1px solid #a9c0ee; display: flex; align-items: center; justify-content: center; }
.sb-lines { width: 7px; height: 6px; background: repeating-linear-gradient(90deg, #6f8fc8 0 1px, transparent 1px 2px); }

/* right */
.right { width: 148px; flex: none; display: flex; flex-direction: column; background: #fff; }
.rtitle { height: 17px; background: #ece9d8; border-top: 1px solid #8a8a80; font-size: 12.600px; line-height: 15px; white-space: nowrap; }
.rgrid { flex: 1; border-left: 1px solid #7f9db9; border-top: 1px solid #7f9db9; overflow: hidden; }
.pt { width: 147px; }
.p22 { width: 22px; } .p121 { width: 121px; } .prest { width: 4px; }
.pt thead th { height: 23px; }
.pt td { padding-left: 20px; }
.pt td:last-child { padding-left: 1px; border-right: 0; }
.pt .orange { background: linear-gradient(#ffdca8, #ffc878) !important; border-right: 0; }
.psel td { background: #316ac5; color: #fff; border-bottom-color: #316ac5; }
.psel td:last-child { background: #e2ecfb; color: #333; }
.psel th { background: #ffd28f !important; color: #4b0082; }
.b { color: #0000ff; }
.pt td.grp { color: #808080; padding-left: 3px; }
.plus { display: inline-block; width: 12px; height: 12px; margin-right: 5px; border: 1px solid #c8c8c8; background: #f4f2e8; color: #111; text-align: center; line-height: 10px; vertical-align: -1px; }

/* annotations over the window */
.redbox { position: absolute; left: 711px; top: 73px; width: 144px; height: 80px; border: 7px solid #f00; }
.overlay { position: absolute; left: 0; top: 0; width: 1125px; height: 804px; pointer-events: none; }
```
